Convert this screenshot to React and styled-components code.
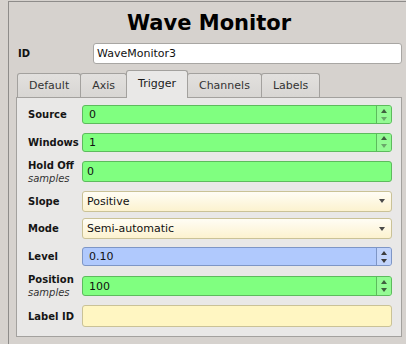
import React from 'react';
import styled, { createGlobalStyle } from 'styled-components';

const GlobalStyle = createGlobalStyle`
  html, body {
    margin: 0;
    padding: 0;
    background: #d6d2ce;
  }
  body {
    font-family: "DejaVu Sans", "Liberation Sans", sans-serif;
    color: #111;
    overflow: hidden;
  }
`;

const Window = styled.div`
  margin: 1px 0 0 8px;
  border-left: 1px solid #8e8c8a;
  border-top: 1px solid #8e8c8a;
  padding: 9px 4px 0 7px;
  height: 360px;
  box-sizing: border-box;
`;

const Title = styled.h1`
  margin: 0;
  font-size: 21px;
  line-height: 24px;
  font-weight: bold;
  text-align: center;
  color: #000;
`;

const IdRow = styled.div`
  display: grid;
  grid-template-columns: 77px 1fr;
  align-items: center;
  margin-top: 8px;
`;

const IdLabel = styled.span`
  padding-left: 2px;
  font-size: 10px;
  font-weight: bold;
`;

const IdInput = styled.div`
  height: 21px;
  box-sizing: border-box;
  border: 1px solid #a8a6a3;
  border-radius: 3px;
  background: #fff;
  padding-left: 3px;
  font-size: 11px;
  line-height: 19px;
  color: #111;
`;

const TabBar = styled.div`
  display: flex;
  align-items: flex-end;
  height: 27px;
  margin-top: 6px;
  padding-left: 1px;
`;

const Tab = styled.div`
  position: relative;
  z-index: ${p => (p.$active ? 1 : 0)};
  height: ${p => (p.$active ? 28 : 24)}px;
  margin-bottom: ${p => (p.$active ? -1 : 0)}px;
  margin-left: -1px;
  &:first-child { margin-left: 0; }
  box-sizing: border-box;
  display: flex;
  align-items: center;
  padding: 0 11px ${p => (p.$active ? 2 : 0)}px;
  border: 1px solid #a3a19e;
  border-bottom: none;
  border-radius: 3px 3px 0 0;
  background: ${p => (p.$active ? '#e9e8e7' : 'linear-gradient(#e2e0de, #d8d6d3)')};
  font-size: 11px;
  color: ${p => (p.$active ? '#1a1a1a' : '#333')};
`;

const Pane = styled.div`
  height: 240px;
  box-sizing: border-box;
  border: 1px solid #a3a19e;
  background: #e9e8e7;
  padding: 3px 9px 5px 11px;
`;

const Row = styled.div`
  display: grid;
  grid-template-columns: 54px 1fr;
  align-items: center;
  height: ${p => p.$h}px;
`;

const Label = styled.div`
  display: flex;
  flex-direction: column;
  font-size: 10px;
  line-height: 13px;
  font-weight: bold;
  color: #151515;
`;

const Sub = styled.span`
  font-weight: normal;
  font-style: italic;
  color: #333;
`;

const Field = styled.div`
  display: flex;
  height: ${p => p.$h}px;
  box-sizing: border-box;
  border: 1px solid ${p => p.$border};
  border-radius: 3px;
  background: ${p => p.$bg};
  overflow: hidden;
`;

const Value = styled.div`
  flex: 1;
  display: flex;
  align-items: center;
  padding-left: ${p => p.$pad}px;
  font-size: 11px;
  color: #111;
`;

const SpinButtons = styled.div`
  width: 14px;
  border-left: 1px solid ${p => p.$border};
  background: ${p => p.$bg};
  display: flex;
  flex-direction: column;
  align-items: center;
  justify-content: center;
  gap: 4px;
`;

const Arrow = styled.span`
  width: 0;
  height: 0;
  border-left: 3.5px solid transparent;
  border-right: 3.5px solid transparent;
  ${p => (p.$up ? 'border-bottom' : 'border-top')}: 4px solid ${p => p.$color};
`;

const ComboArrow = styled.div`
  display: flex;
  align-items: center;
  padding-right: 6px;
`;

const green = { bg: '#80ff80', border: '#5dbb5d', btn: '#94fb94', on: '#3f5f3f', off: '#6aa86a' };
const blue = { bg: '#b0c9fd', border: '#7e96c6', btn: '#c2d4fb', on: '#3c3c3c', off: '#3c3c3c' };
const comboBg = 'linear-gradient(#fffdf5, #fcf2cf)';
const yellowBorder = '#cac297';

function SpinBox({ value, tone, h, downOff }) {
  return (
    <Field $h={h} $bg={tone.bg} $border={tone.border}>
      <Value $pad={6}>{value}</Value>
      <SpinButtons $border={tone.border} $bg={tone.btn}>
        <Arrow $up $color={tone.on} />
        <Arrow $color={downOff ? tone.off : tone.on} />
      </SpinButtons>
    </Field>
  );
}

function Combo({ value }) {
  return (
    <Field $h={21} $bg={comboBg} $border={yellowBorder}>
      <Value $pad={4}>{value}</Value>
      <ComboArrow>
        <Arrow $color="#4a4a4a" />
      </ComboArrow>
    </Field>
  );
}

const tabs = ['Default', 'Axis', 'Trigger', 'Channels', 'Labels'];

export default function App() {
  return (
    <>
      <GlobalStyle />
      <Window>
        <Title>Wave Monitor</Title>
        <IdRow>
          <IdLabel>ID</IdLabel>
          <IdInput>WaveMonitor3</IdInput>
        </IdRow>
        <TabBar>
          {tabs.map(t => (
            <Tab key={t} $active={t === 'Trigger'}>{t}</Tab>
          ))}
        </TabBar>
        <Pane>
          <Row $h={27}>
            <Label>Source</Label>
            <SpinBox value="0" tone={green} h={19} downOff />
          </Row>
          <Row $h={28}>
            <Label>Windows</Label>
            <SpinBox value="1" tone={green} h={19} downOff />
          </Row>
          <Row $h={31}>
            <Label>Hold Off<Sub>samples</Sub></Label>
            <Field $h={21} $bg={green.bg} $border={green.border}>
              <Value $pad={4}>0</Value>
            </Field>
          </Row>
          <Row $h={28}>
            <Label>Slope</Label>
            <Combo value="Positive" />
          </Row>
          <Row $h={27}>
            <Label>Mode</Label>
            <Combo value="Semi-automatic" />
          </Row>
          <Row $h={29}>
            <Label>Level</Label>
            <SpinBox value="0.10" tone={blue} h={19} />
          </Row>
          <Row $h={30}>
            <Label>Position<Sub>samples</Sub></Label>
            <SpinBox value="100" tone={green} h={20} />
          </Row>
          <Row $h={30}>
            <Label>Label ID</Label>
            <Field $h={22} $bg="#fff6c2" $border={yellowBorder} />
          </Row>
        </Pane>
      </Window>
    </>
  );
}
